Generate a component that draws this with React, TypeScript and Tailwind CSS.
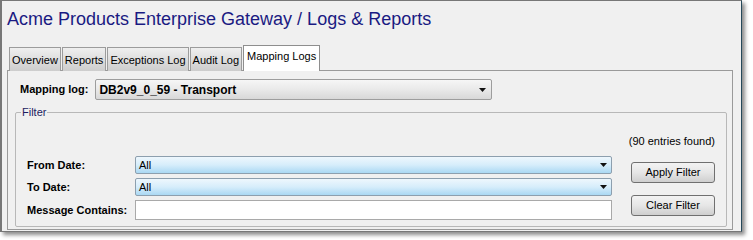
import React, { useState } from 'react';

const font = { fontFamily: '"Liberation Sans", Arial, sans-serif' };

const tabs = ['Overview', 'Reports', 'Exceptions Log', 'Audit Log', 'Mapping Logs'];

// small black down arrow used by the combo boxes
const Arrow = () => (
  <svg width="7" height="4" viewBox="0 0 7 4" className="shrink-0">
    <path d="M0 0h7L3.5 4z" fill="#111" />
  </svg>
);

const App: React.FC = () => {
  const [activeTab, setActiveTab] = useState('Mapping Logs');
  const [message, setMessage] = useState('');

  return (
    <div className="w-[753px] h-[240px] bg-white" style={font}>
      <div className="w-[742px] h-[232px] bg-[#f0f0f0] border-l-2 border-t border-b border-r border-[#777777] border-r-[#24485a] shadow-[3px_3px_4px_rgba(0,0,0,0.45)] flex flex-col pl-[5px]">
        {/* Title */}
        <div className="pt-[7px] h-[45px] text-[18px] leading-[22px] text-[#1a1a82]">
          Acme Products Enterprise Gateway / Logs &amp; Reports
        </div>

        {/* Tabs */}
        <div className="flex items-end ml-[2px] h-[26px] relative z-10">
          {tabs.map((tab) =>
            tab === activeTab ? (
              <div
                key={tab}
                className="h-[26px] px-[3px] bg-white border border-b-0 border-[#8e8e8e] text-[11px] leading-[20px] text-black"
              >
                {tab}
              </div>
            ) : (
              <button
                key={tab}
                onClick={() => setActiveTab(tab)}
                className="h-[24px] px-[2px] mr-[1px] bg-gradient-to-b from-[#efefef] to-[#cdcdcd] border border-b-0 border-[#9c9c9c] text-[11px] leading-[22px] text-black"
              >
                {tab}
              </button>
            )
          )}
        </div>

        {/* Tab panel */}
        <div className="-mt-[1px] w-[726px] flex-1 mb-[1px] border border-[#9a9a9a] bg-[#f0f0f0] flex flex-col px-[7px] pb-[2px]">
          <div className="flex items-center mt-[8px] pl-[5px] gap-[7px]">
            <span className="text-[11px] font-bold text-black">Mapping log:</span>
            <div className="w-[397px] h-[21px] rounded-[2px] border border-[#9d9d9d] bg-gradient-to-b from-[#f6f6f6] via-[#e9e9e9] to-[#d8d8d8] flex items-center justify-between pl-[3px] pr-[5px]">
              <span className="text-[12px] font-bold text-black">DB2v9_0_59 - Transport</span>
              <Arrow />
            </div>
          </div>

          <fieldset className="mt-[6px] w-[709px] border border-[#b8b8b8] rounded-[2px] px-[11px] pb-[6px]">
            <legend className="ml-[-6px] px-[1px] text-[11px] leading-[12px] text-[#1c1c60]">Filter</legend>
            <div className="mt-[16px] text-right text-[11px] leading-[14px] text-black">(90 entries found)</div>
            <div className="flex mt-[8px]">
              <div className="grid grid-cols-[108px_477px] gap-y-[4px] items-center">
                <span className="text-[11px] font-bold text-black">From Date:</span>
                <div className="h-[18px] rounded-[2px] border border-[#8d9fae] bg-gradient-to-b from-[#eef7fd] via-[#d6edfb] to-[#aad8f3] flex items-center justify-between pl-[3px] pr-[4px]">
                  <span className="text-[11px] text-black">All</span>
                  <Arrow />
                </div>
                <span className="text-[11px] font-bold text-black">To Date:</span>
                <div className="h-[18px] rounded-[2px] border border-[#8d9fae] bg-gradient-to-b from-[#eef7fd] via-[#d6edfb] to-[#aad8f3] flex items-center justify-between pl-[3px] pr-[4px]">
                  <span className="text-[11px] text-black">All</span>
                  <Arrow />
                </div>
                <span className="text-[11px] font-bold text-black whitespace-nowrap">Message Contains:</span>
                <input
                  value={message}
                  onChange={(e) => setMessage(e.target.value)}
                  className="h-[20px] border border-[#a9a9a9] bg-white text-[11px] px-[3px] outline-none"
                />
              </div>
              <div className="flex flex-col ml-[19px] mt-[6px] gap-[12px]">
                <button className="w-[84px] h-[21px] rounded-[3px] border border-[#707070] bg-gradient-to-b from-[#f3f3f3] via-[#e6e6e6] to-[#cfcfcf] text-[11px] text-black">
                  Apply Filter
                </button>
                <button className="w-[84px] h-[21px] rounded-[3px] border border-[#707070] bg-gradient-to-b from-[#f3f3f3] via-[#e6e6e6] to-[#cfcfcf] text-[11px] text-black">
                  Clear Filter
                </button>
              </div>
            </div>
          </fieldset>
        </div>
      </div>
    </div>
  );
};

export default App;
